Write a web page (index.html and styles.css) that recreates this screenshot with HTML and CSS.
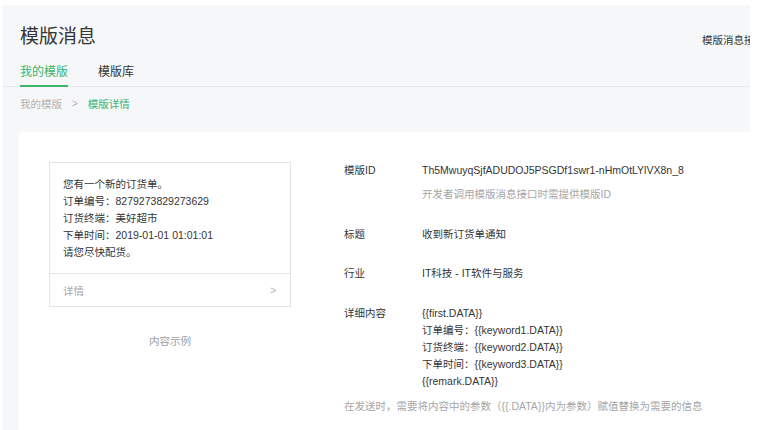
FILE: index.html
```html
<!DOCTYPE html>
<html lang="zh-CN">
<head>
<meta charset="utf-8">
<title>模版消息</title>
<link rel="stylesheet" href="styles.css">
</head>
<body>
<div class="page">
  <div class="main">
    <div class="head">
      <h1 class="title">模版消息</h1>
      <a class="doc-link">模版消息接口文档</a>
    </div>
    <div class="tabs">
      <span class="tab active">我的模版</span>
      <span class="tab">模版库</span>
    </div>
    <div class="crumbs">
      <span class="crumb">我的模版</span>
      <span class="sep">&gt;</span>
      <span class="crumb current">模版详情</span>
    </div>
    <div class="card">
      <div class="preview">
        <div class="msg">
          <div class="msg-body">
            <p>您有一个新的订货单。</p>
            <p>订单编号：8279273829273629</p>
            <p>订货终端：美好超市</p>
            <p>下单时间：2019-01-01 01:01:01</p>
            <p>请您尽快配货。</p>
          </div>
          <div class="msg-foot">
            <span>详情</span>
            <span class="arrow">&gt;</span>
          </div>
        </div>
        <div class="caption">内容示例</div>
      </div>
      <div class="info">
        <div class="row">
          <div class="label">模版ID</div>
          <div class="value">
            <p>Th5MwuyqSjfADUDOJ5PSGDf1swr1-nHmOtLYlVX8n_8</p>
            <p class="hint">开发者调用模版消息接口时需提供模版ID</p>
          </div>
        </div>
        <div class="row">
          <div class="label">标题</div>
          <div class="value"><p>收到新订货单通知</p></div>
        </div>
        <div class="row">
          <div class="label">行业</div>
          <div class="value"><p>IT科技 - IT软件与服务</p></div>
        </div>
        <div class="row last">
          <div class="label">详细内容</div>
          <div class="value">
            <p>{{first.DATA}}</p>
            <p>订单编号：{{keyword1.DATA}}</p>
            <p>订货终端：{{keyword2.DATA}}</p>
            <p>下单时间：{{keyword3.DATA}}</p>
            <p>{{remark.DATA}}</p>
          </div>
        </div>
        <p class="note">在发送时，需要将内容中的参数（{{.DATA}}内为参数）赋值替换为需要的信息</p>
      </div>
    </div>
  </div>
</div>
</body>
</html>
```
FILE: styles.css
```css
* { box-sizing: border-box; }
html, body { margin: 0; padding: 0; background: #fff; }
body {
  font-family: "Liberation Sans", "Noto Sans CJK SC", sans-serif;
  color: #353535;
  width: 757px;
  height: 430px;
  overflow: hidden;
}
p { margin: 0; }
.page {
  padding: 5px 7px 0 3px;
  height: 430px;
}
.main {
  background: #f6f7f9;
  height: 425px;
  overflow: hidden;
}
.head {
  display: flex;
  justify-content: space-between;
  align-items: flex-start;
  padding-left: 17px;
  white-space: nowrap;
}
.title {
  margin: 19px 0 0;
  font-size: 19px;
  line-height: 26px;
  font-weight: normal;
  color: #353535;
}
.doc-link {
  margin-top: 27px;
  margin-right: -52px;
  font-size: 10.5px;
  line-height: 16px;
  color: #353535;
  overflow: hidden;
  width: 100px;
}
.tabs {
  display: flex;
  gap: 30px;
  margin-top: 9px;
  padding-left: 17px;
  border-bottom: 1px solid #e7e8ea;
}
.tab {
  font-size: 12px;
  line-height: 16px;
  padding: 5px 0 5px;
  color: #353535;
  border-bottom: 2px solid transparent;
  margin-bottom: -1px;
}
.tab.active {
  color: #3cb46a;
  border-bottom-color: #3cb46a;
}
.crumbs {
  display: flex;
  align-items: center;
  gap: 10px;
  padding-left: 17px;
  margin-top: 9px;
  font-size: 10.5px;
  line-height: 16px;
  color: #b2b2b2;
}
.crumb.current { color: #3cb46a; }
.sep { font-size: 10px; color: #b2b2b2; }
.card {
  margin: 20px 0 0 16px;
  background: #fff;
  border-radius: 4px 0 0 0;
  height: 320px;
  display: flex;
  padding: 30px 0 0 30px;
}
.preview {
  width: 242px;
  flex: none;
}
.msg {
  border: 1px solid #e5e5e5;
}
.msg-body {
  padding: 13px 13px 12px;
  font-size: 10.5px;
  line-height: 17px;
  color: #353535;
}
.msg-foot {
  border-top: 1px solid #e5e5e5;
  display: flex;
  justify-content: space-between;
  align-items: center;
  height: 33px;
  padding: 0 14px 0 13px;
  font-size: 10.5px;
  color: #a6a6a6;
}
.arrow { font-size: 10px; color: #b2b2b2; }
.caption {
  text-align: center;
  margin-top: 26px;
  font-size: 10.5px;
  line-height: 16px;
  color: #a0a0a0;
}
.info {
  margin-left: 53px;
  font-size: 10.5px;
  line-height: 17px;
  white-space: nowrap;
}
.row {
  display: flex;
  margin-bottom: 22.5px;
}
.row.last { margin-bottom: 8px; }
.label {
  width: 78px;
  flex: none;
  color: #353535;
}
.value { color: #353535; }
.hint {
  margin-top: 7px;
  color: #a6a6a6;
}
.note { color: #a6a6a6; }
```
